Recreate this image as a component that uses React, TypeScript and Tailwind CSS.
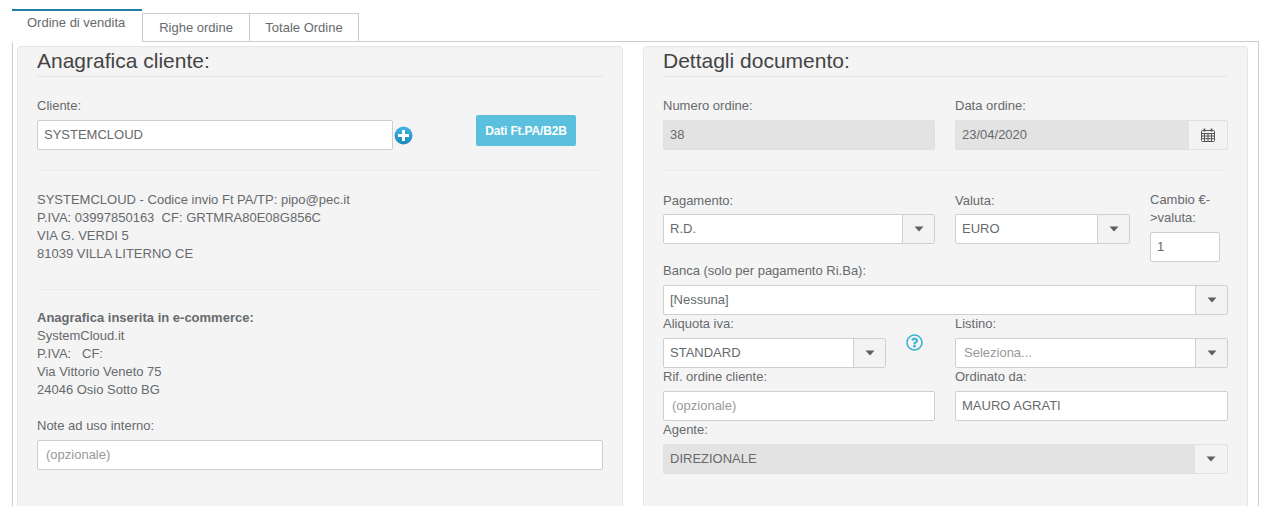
import React from 'react';
import { FaRegQuestionCircle } from 'react-icons/fa';

const inputBase = 'h-[30px] border border-[#cfcfcf] rounded-[2px] flex items-center text-[13px]';

const Label: React.FC<{ children: React.ReactNode; className?: string }> = ({ children, className }) => (
  <div className={`text-[13px] leading-[18px] text-[#676a6c] ${className || ''}`}>{children}</div>
);

const Caret = () => (
  <svg width="10" height="6" viewBox="0 0 10 6">
    <path d="M0.5 0.5h9L5 5.5z" fill="#5c5f61" />
  </svg>
);

const CalendarIcon = () => (
  <svg width="14" height="14" viewBox="0 0 14 14" fill="none" stroke="#555" strokeWidth="1">
    <rect x="0.5" y="2.5" width="13" height="11" rx="1" />
    <path d="M0.5 5.5h13M0.5 8h13M0.5 10.7h13M3.5 5.5v8M7 5.5v8M10.5 5.5v8" />
    <path d="M3.5 0.5v3M10.5 0.5v3" strokeWidth="1.6" />
  </svg>
);

const PlusIcon = () => (
  <svg width="19" height="19" viewBox="0 0 19 19">
    <defs>
      <linearGradient id="plusBlue" x1="0" y1="0" x2="0" y2="1">
        <stop offset="0" stopColor="#45b4e6" />
        <stop offset="1" stopColor="#1a87bd" />
      </linearGradient>
    </defs>
    <circle cx="9.5" cy="9.5" r="9" fill="url(#plusBlue)" />
    <path d="M8 4h3v4h4v3h-4v4H8v-4H4V8h4z" fill="#fff" />
  </svg>
);

const TextBox: React.FC<{ value: string; placeholder?: boolean; disabled?: boolean; className?: string }> = ({
  value,
  placeholder,
  disabled,
  className,
}) => (
  <div
    className={`${inputBase} ${disabled ? 'bg-[#e3e3e3] border-[#e0e0e0] pl-[6px]' : 'bg-white'} ${
      placeholder ? 'text-[#999999] pl-[8px]' : 'text-[#676a6c]'
    } ${!disabled && !placeholder ? 'pl-[6px]' : ''} ${className || ''}`}
  >
    {value}
  </div>
);

const SelectBox: React.FC<{ value: string; placeholder?: boolean; disabled?: boolean }> = ({
  value,
  placeholder,
  disabled,
}) => (
  <div className={`h-[30px] border rounded-[2px] flex text-[13px] overflow-hidden ${disabled ? 'border-[#e0e0e0]' : 'border-[#cfcfcf]'}`}>
    <div
      className={`flex-1 flex items-center ${disabled ? 'bg-[#e3e3e3] pl-[6px]' : 'bg-white'} ${
        placeholder ? 'text-[#999999] pl-[8px]' : 'text-[#676a6c]'
      } ${!disabled && !placeholder ? 'pl-[6px]' : ''}`}
    >
      {value}
    </div>
    <div className={`w-[32px] flex items-center justify-center bg-[#f3f3f4] ${disabled ? '' : 'border-l border-[#cfcfcf]'}`}>
      <Caret />
    </div>
  </div>
);

const Panel: React.FC<{ title: string; className?: string; children: React.ReactNode }> = ({ title, className, children }) => (
  <div className={`bg-[#f4f4f4] border border-[#e4e4e4] rounded-[4px] px-[19px] h-[480px] ${className || ''}`}>
    <h2 className="h-[30px] border-b border-[#e6e6e6] text-[21px] leading-[28px] text-[#444444]">{title}</h2>
    {children}
  </div>
);

const Divider: React.FC<{ className?: string }> = ({ className }) => (
  <div className={`border-t border-[#ececec] ${className || ''}`} />
);

export default function App() {
  return (
    <div
      className="h-[506px] w-[1276px] overflow-hidden bg-white pt-[9px] pl-[12px]"
      style={{ fontFamily: '"Liberation Sans", Arial, sans-serif' }}
    >
      {/* Tabs */}
      <div className="flex items-end h-[33px] w-[1247px] text-[13px] text-[#676a6c]">
        <div className="w-[130px] h-[33px] border-t-2 border-[#1f7ea8] bg-white pl-[15px] leading-[24px] relative z-10">
          Ordine di vendita
        </div>
        <div className="w-[107px] h-[29px] border-t border-l border-[#cccccc] text-center leading-[28px]">Righe ordine</div>
        <div className="w-[110px] h-[29px] border-t border-x border-[#cccccc] text-center leading-[28px]">Totale Ordine</div>
      </div>

      {/* Tab content */}
      <div className="w-[1247px] h-[470px] border-l border-r border-t border-[#cccccc] -mt-[1px] pt-[4px] pl-[4px] flex">
        <Panel title="Anagrafica cliente:" className="w-[606px]">
          <Label className="mt-[20px]">Cliente:</Label>
          <div className="flex mt-[5px]">
            <TextBox value="SYSTEMCLOUD" className="w-[356px]" />
            <div className="ml-[1px] mt-[6px]">
              <PlusIcon />
            </div>
            <div className="ml-[63px] -mt-[5px] w-[100px] h-[31px] bg-[#5bc0de] rounded-[2px] text-white text-[12px] font-bold tracking-[-0.15px] flex items-center justify-center">
              Dati Ft.PA/B2B
            </div>
          </div>
          <Divider className="mt-[20px]" />
          <div className="mt-[20px] text-[13px] leading-[18px] text-[#676a6c]">
            <div>SYSTEMCLOUD - Codice invio Ft PA/TP: pipo@pec.it</div>
            <div>P.IVA: 03997850163&nbsp; CF: GRTMRA80E08G856C</div>
            <div>VIA G. VERDI 5</div>
            <div>81039 VILLA LITERNO CE</div>
          </div>
          <Divider className="mt-[26px]" />
          <div className="mt-[19px] text-[13px] leading-[18px] text-[#676a6c]">
            <div className="font-bold">Anagrafica inserita in e-commerce:</div>
            <div>SystemCloud.it</div>
            <div>P.IVA: &nbsp; CF:</div>
            <div>Via Vittorio Veneto 75</div>
            <div>24046 Osio Sotto BG</div>
          </div>
          <Label className="mt-[18px]">Note ad uso interno:</Label>
          <TextBox value="(opzionale)" placeholder className="mt-[5px]" />
        </Panel>

        <Panel title="Dettagli documento:" className="w-[605px] ml-[20px]">
          <div className="grid grid-cols-[272px_273px] gap-x-[20px] mt-[20px]">
            <div>
              <Label>Numero ordine:</Label>
              <TextBox value="38" disabled className="mt-[5px]" />
            </div>
            <div>
              <Label>Data ordine:</Label>
              <div className="mt-[5px] h-[30px] border border-[#e0e0e0] rounded-[2px] flex text-[13px]">
                <div className="flex-1 bg-[#e3e3e3] flex items-center pl-[6px] text-[#676a6c]">23/04/2020</div>
                <div className="w-[38px] bg-[#f3f3f4] flex items-center justify-center">
                  <CalendarIcon />
                </div>
              </div>
            </div>
          </div>
          <Divider className="mt-[20px]" />

          <div className="flex mt-[21px] h-[71px]">
            <div className="w-[272px]">
              <Label>Pagamento:</Label>
              <div className="mt-[4px]">
                <SelectBox value="R.D." />
              </div>
            </div>
            <div className="w-[175px] ml-[20px]">
              <Label>Valuta:</Label>
              <div className="mt-[4px]">
                <SelectBox value="EURO" />
              </div>
            </div>
            <div className="w-[70px] ml-[20px] -mt-[1px]">
              <Label>Cambio €-&gt;valuta:</Label>
              <TextBox value="1" className="mt-[5px]" />
            </div>
          </div>

          <Label className="-mt-[1px]">Banca (solo per pagamento Ri.Ba):</Label>
          <div className="mt-[5px]">
            <SelectBox value="[Nessuna]" />
          </div>

          <div className="grid grid-cols-[272px_273px] gap-x-[20px]">
            <div>
              <Label>Aliquota iva:</Label>
              <div className="flex mt-[5px]">
                <div className="w-[223px]">
                  <SelectBox value="STANDARD" />
                </div>
                <FaRegQuestionCircle className="ml-[20px] mt-[-4px] text-[#3bb3d3]" size={17} />
              </div>
            </div>
            <div>
              <Label>Listino:</Label>
              <div className="mt-[5px]">
                <SelectBox value="Seleziona..." placeholder />
              </div>
            </div>
            <div>
              <Label>Rif. ordine cliente:</Label>
              <TextBox value="(opzionale)" placeholder className="mt-[5px]" />
            </div>
            <div>
              <Label>Ordinato da:</Label>
              <TextBox value="MAURO AGRATI" className="mt-[5px]" />
            </div>
          </div>

          <Label>Agente:</Label>
          <div className="mt-[5px]">
            <SelectBox value="DIREZIONALE" disabled />
          </div>
        </Panel>
      </div>
    </div>
  );
}
